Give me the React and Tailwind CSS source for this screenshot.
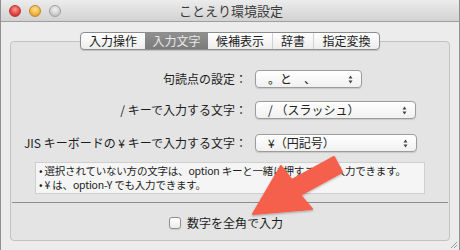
import React from "react";

const jp = { fontFamily: '"Noto Sans CJK JP", "Noto Sans", sans-serif' };

const tabs = [
  { label: "入力操作", w: "w-[64px]" },
  { label: "入力文字", w: "w-[63px]", active: true },
  { label: "候補表示", w: "w-[64px]" },
  { label: "辞書", w: "w-[41px]" },
  { label: "指定変換", w: "w-[66px]" },
];

function Light({ color }) {
  return <div className={`w-[12px] h-[12px] rounded-full border ${color}`} />;
}

function Select({ value, w }) {
  return (
    <div className={`${w} h-[18px] flex items-center justify-between pl-[12px] pr-[8px] rounded-[4px] border border-[#9c9c9c] bg-gradient-to-b from-white to-[#f1f1f1] shadow-[0_1px_1px_rgba(0,0,0,0.12)] text-[12px] text-[#222]`}>
      <span className="whitespace-pre">{value}</span>
      <svg width="5" height="9" viewBox="0 0 5 9">
        <path d="M2.5 0.5 L4.5 3.5 L0.5 3.5 Z M2.5 8.5 L4.5 5.5 L0.5 5.5 Z" fill="#444" />
      </svg>
    </div>
  );
}

function Row({ label, value, w, mt }) {
  return (
    <div className={`flex items-center ${mt}`}>
      <div className="w-[238px] text-right text-[12px] text-[#1c1c1c] pr-[2px]">{label}</div>
      <div className="ml-[6px]">
        <Select value={value} w={w} />
      </div>
    </div>
  );
}

export default function App() {
  return (
    <div className="relative w-[460px] h-[250px] overflow-hidden bg-[#ececec] border-x border-[#8f8f8f] flex flex-col" style={jp}>
      <div className="h-[22px] shrink-0 grid grid-cols-[1fr_auto_1fr] items-center bg-gradient-to-b from-[#ececec] to-[#d2d2d2] border-b border-[#9f9f9f]">
        <div className="flex items-center gap-[8px] pl-[8px]">
          <Light color="bg-[radial-gradient(circle_at_50%_35%,#ff9a94,#e0413b_60%,#b52a25)] border-[#b83a35]" />
          <Light color="bg-[radial-gradient(circle_at_50%_35%,#ffe29a,#efb23a_60%,#c98a1c)] border-[#c08a2a]" />
          <Light color="bg-[radial-gradient(circle_at_50%_35%,#f2f2f2,#cfcfcf_60%,#a9a9a9)] border-[#a0a0a0]" />
        </div>
        <div className="text-[13px] text-[#3a3a3a] pl-[2px]">ことえり環境設定</div>
        <div />
      </div>

      <div className="px-[9px] pt-[10px] flex flex-col">
        <div className="relative z-10 flex justify-center h-[18px]">
          <div className="flex rounded-[4px] border border-[#8c8c8c] bg-gradient-to-b from-white to-[#ededed] shadow-[0_1px_1px_rgba(0,0,0,0.15)] overflow-hidden">
            {tabs.map((t, i) => (
              <div
                key={t.label}
                className={`${t.w} flex items-center justify-center text-[12px] ${
                  t.active
                    ? "bg-gradient-to-b from-[#8f8f8f] to-[#7b7b7b] text-[#e9e9e9]"
                    : "text-[#1a1a1a]"
                } ${i > 0 && !t.active && !tabs[i - 1].active ? "border-l border-[#d0d0d0]" : ""}`}
              >
                {t.label}
              </div>
            ))}
          </div>
        </div>

        <div className="-mt-[9px] h-[200px] rounded-[4px] border border-[#c2c2c2] bg-[#e4e4e4] flex flex-col pt-[20px]">
          <Row label="句読点の設定：" value="。と　、" w="w-[107px]" mt="mt-[8px]" />
          <Row label="/ キーで入力する文字：" value="/ （スラッシュ）" w="w-[161px]" mt="mt-[13px]" />
          <Row label="JIS キーボードの ¥ キーで入力する文字：" value="¥（円記号）" w="w-[162px]" mt="mt-[15px]" />

          <div className="ml-[24px] mt-[10px] w-[390px] h-[32px] bg-[#f5f5f5] border border-[#cfcfcf] px-[3px] pt-[1px] text-[10.5px] leading-[14px] tracking-[-0.2px] whitespace-nowrap text-[#1c1c1c]">
            <div>• 選択されていない方の文字は、option キーと一緒に押すことで入力できます。</div>
            <div>• ¥ は、option-Y でも入力できます。</div>
          </div>

          <div className="mx-[1px] mt-[8px] border-t border-[#8d8d8d]" />

          <div className="flex items-center justify-center gap-[6px] mt-[11px] pr-[8px]">
            <div className="w-[12px] h-[12px] rounded-[3px] border border-[#8e8e8e] bg-gradient-to-b from-white to-[#ececec] shadow-[0_1px_1px_rgba(0,0,0,0.1)]" />
            <span className="text-[12px] text-[#1c1c1c]">数字を全角で入力</span>
          </div>
        </div>
      </div>

      <svg className="absolute right-[1px] bottom-[1px]" width="8" height="8" viewBox="0 0 8 8">
        <path d="M7 1 L1 7 M7 4 L4 7" stroke="#9a9a9a" strokeWidth="1" />
      </svg>

      <svg className="absolute left-0 top-0 pointer-events-none" width="460" height="250" viewBox="0 0 460 250">
        <defs>
          <filter id="sh" x="-20%" y="-20%" width="140%" height="140%">
            <feDropShadow dx="0" dy="1" stdDeviation="1.2" floodColor="#000" floodOpacity="0.3" />
          </filter>
        </defs>
        <polygon
          points="252,214 280,166 291,180 333,157 341,172 299,195 311,209"
          fill="#f5604d"
          filter="url(#sh)"
          strokeLinejoin="round"
          stroke="#f5604d"
          strokeWidth="2"
        />
      </svg>
    </div>
  );
}
